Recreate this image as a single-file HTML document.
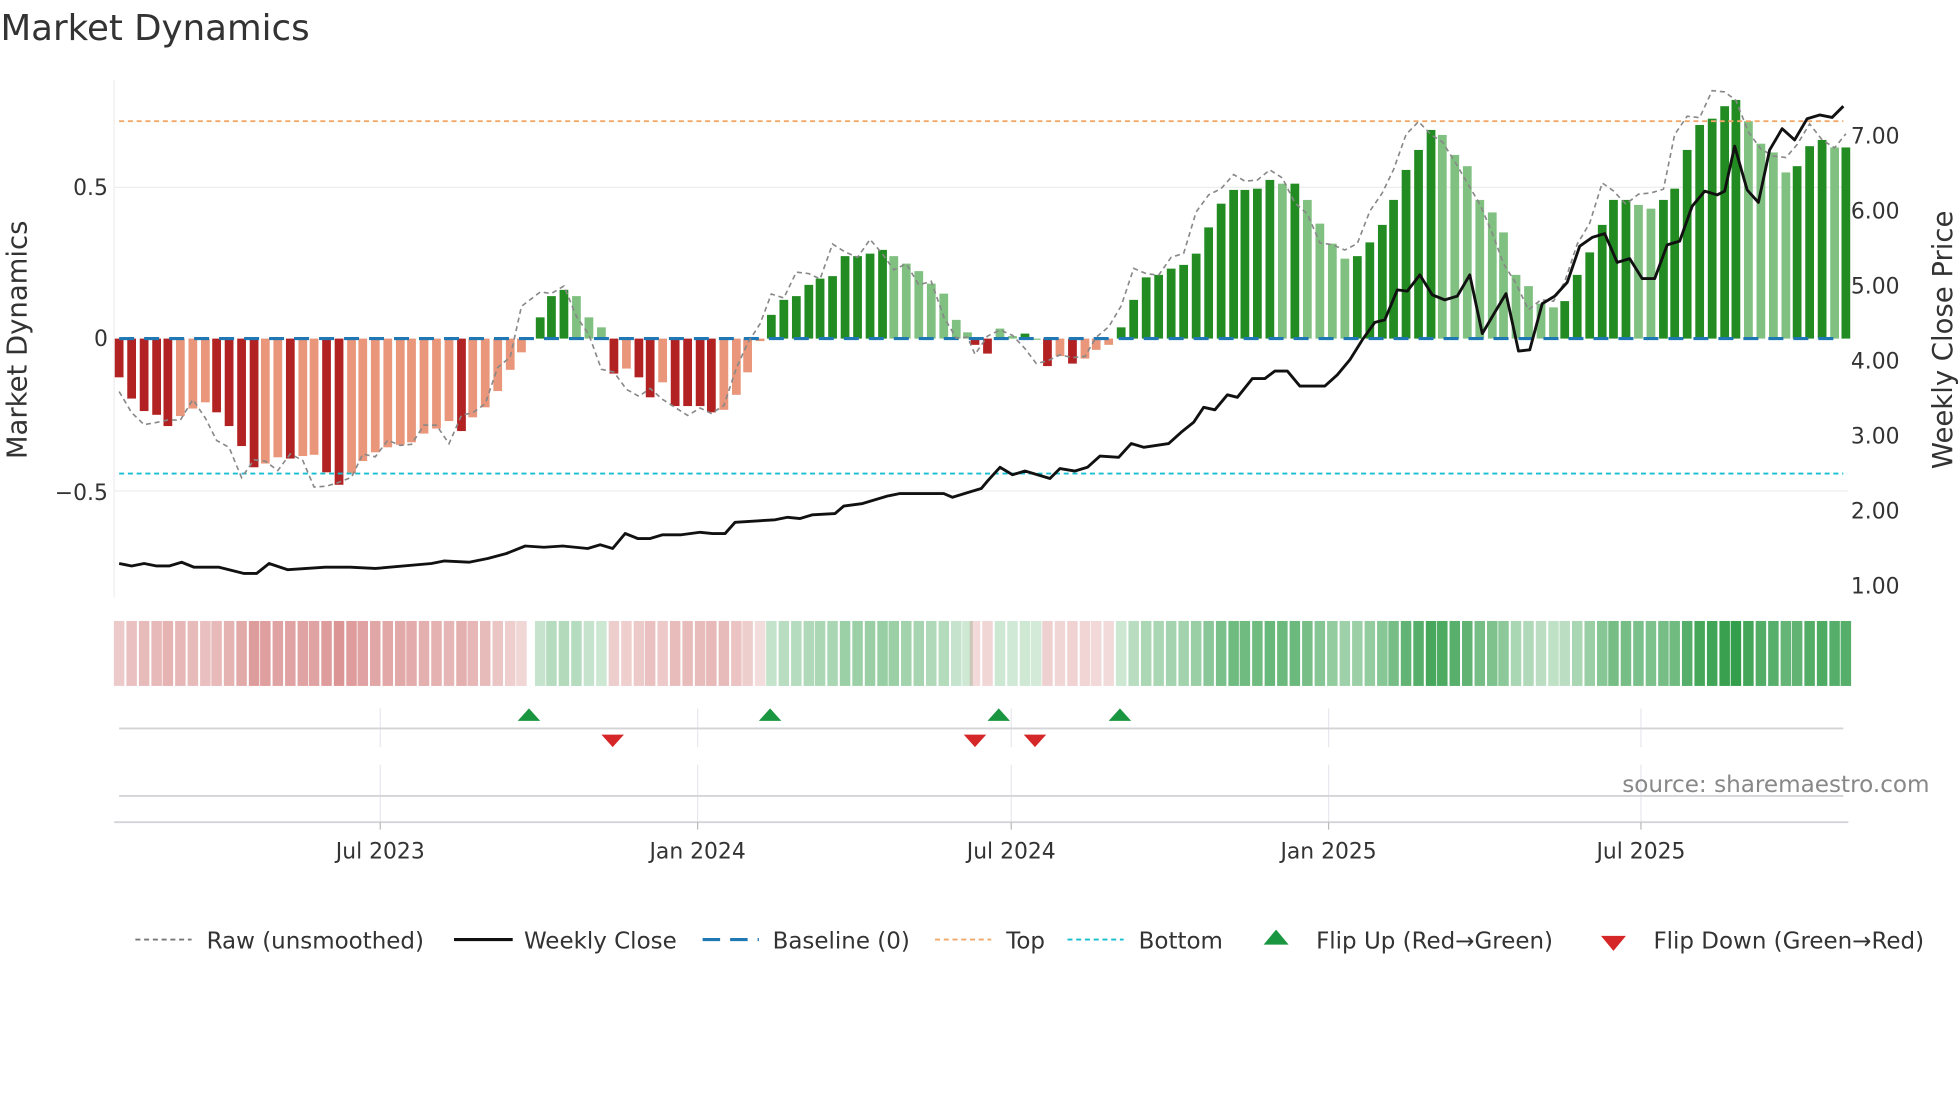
<!DOCTYPE html>
<html><head><meta charset="utf-8"><style>
html,body{margin:0;padding:0;background:#fff;}
svg{display:block;font-family:"DejaVu Sans","Liberation Sans",sans-serif;}
</style></head><body>
<svg id="c" width="1960" height="1102" viewBox="0 0 1568 882" xmlns="http://www.w3.org/2000/svg">
<text x="0" y="32" font-size="28.5" fill="#333">Market Dynamics</text>
<line x1="91" y1="64" x2="91" y2="478" stroke="#eee"/>
<line x1="91" y1="150" x2="1479" y2="150" stroke="#eee"/>
<line x1="91" y1="393" x2="1479" y2="393" stroke="#eee"/>
<g font-size="17.5" fill="#333">
<text x="86" y="156" text-anchor="end">0.5</text>
<text x="86" y="277" text-anchor="end">0</text>
<text x="86" y="400" text-anchor="end">−0.5</text>
<text x="1481" y="115">7.00</text><text x="1481" y="175">6.00</text><text x="1481" y="235">5.00</text>
<text x="1481" y="295">4.00</text><text x="1481" y="355">3.00</text><text x="1481" y="415">2.00</text><text x="1481" y="475">1.00</text>
</g>
<text transform="translate(21,272) rotate(-90)" font-size="22" fill="#333" text-anchor="middle">Market Dynamics</text>
<text transform="translate(1562,272) rotate(-90)" font-size="22" fill="#333" text-anchor="middle">Weekly Close Price</text>
<g id="bars"></g>
<line x1="95" y1="97" x2="1475" y2="97" stroke="#f0a868" stroke-width="1.5" stroke-dasharray="4,3"/>
<line x1="95" y1="379" x2="1475" y2="379" stroke="#17becf" stroke-width="1.5" stroke-dasharray="4,3"/>
<line x1="95" y1="271" x2="1475" y2="271" stroke="#1f77b4" stroke-width="2.5" stroke-dasharray="12,8"/>
<g id="lines"></g>
<g stroke="#e8e8ee">
<line x1="304" y1="567" x2="304" y2="598"/><line x1="558" y1="567" x2="558" y2="598"/><line x1="809" y1="567" x2="809" y2="598"/><line x1="1063" y1="567" x2="1063" y2="598"/><line x1="1313" y1="567" x2="1313" y2="598"/>
<line x1="304" y1="612" x2="304" y2="658"/><line x1="558" y1="612" x2="558" y2="658"/><line x1="809" y1="612" x2="809" y2="658"/><line x1="1063" y1="612" x2="1063" y2="658"/><line x1="1313" y1="612" x2="1313" y2="658"/>
</g>
<line x1="95" y1="583" x2="1475" y2="583" stroke="#d4d4d8" stroke-width="1.5"/>
<line x1="95" y1="637" x2="1475" y2="637" stroke="#d4d4d8" stroke-width="1.5"/>
<line x1="91" y1="658" x2="1479" y2="658" stroke="#d4d4d8" stroke-width="1.5"/>
<g stroke="#bbb"><line x1="304" y1="658" x2="304" y2="664"/><line x1="558" y1="658" x2="558" y2="664"/><line x1="809" y1="658" x2="809" y2="664"/><line x1="1063" y1="658" x2="1063" y2="664"/><line x1="1313" y1="658" x2="1313" y2="664"/></g>
<g fill="#1a9641"><path d="M423 567l9 10h-18z"/><path d="M616 567l9 10h-18z"/><path d="M799 567l9 10h-18z"/><path d="M896 567l9 10h-18z"/></g>
<g fill="#d62728"><path d="M490 598l9 -10h-18z"/><path d="M780 598l9 -10h-18z"/><path d="M828 598l9 -10h-18z"/></g>
<text x="1544" y="634" font-size="18.5" fill="#888" text-anchor="end">source: sharemaestro.com</text>
<g font-size="17.5" fill="#333" text-anchor="middle">
<text x="304" y="687">Jul 2023</text><text x="558" y="687">Jan 2024</text><text x="809" y="687">Jul 2024</text><text x="1063" y="687">Jan 2025</text><text x="1313" y="687">Jul 2025</text>
</g>
<g font-size="18.4" fill="#333">
<line x1="108" y1="752" x2="153" y2="752" stroke="#777" stroke-width="1.5" stroke-dasharray="4,3"/><text x="165" y="759">Raw (unsmoothed)</text>
<line x1="363" y1="752" x2="410" y2="752" stroke="#111" stroke-width="2.5"/><text x="419" y="759">Weekly Close</text>
<line x1="562" y1="752" x2="607" y2="752" stroke="#1f77b4" stroke-width="2.5" stroke-dasharray="14,8"/><text x="618" y="759">Baseline (0)</text>
<line x1="748" y1="752" x2="793" y2="752" stroke="#f0a868" stroke-width="1.5" stroke-dasharray="4,3"/><text x="805" y="759">Top</text>
<line x1="854" y1="752" x2="899" y2="752" stroke="#17becf" stroke-width="1.5" stroke-dasharray="4,3"/><text x="911" y="759">Bottom</text>
<path d="M1021 744l10 12h-20z" fill="#1a9641"/><text x="1053" y="759">Flip Up (Red→Green)</text>
<path d="M1291 761l10 -12h-20z" fill="#d62728"/><text x="1323" y="759">Flip Down (Green→Red)</text>
</g>
</svg>
<script>
var ns="http://www.w3.org/2000/svg";
function el(p,t,a){var e=document.createElementNS(ns,t);for(var k in a)e.setAttribute(k,a[k]);p.appendChild(e);return e;}
var kp=[[95,302],[105,319],[115,329],[125,332],[134,341],[144,333],[154,327],[164,322],[173,330],[183,341],[193,357],[203,374],[212,371],[222,366],[232,367],[242,365],[251,364],[261,378],[271,388],[281,379],[290,369],[300,362],[310,358],[320,356],[329,354],[339,347],[349,343],[359,337],[369,345],[378,334],[388,326],[398,313],[408,296],[417,282],[432,254],[441,237],[451,232],[461,237],[471,254],[481,262],[491,299],[501,295],[511,302],[520,318],[530,306],[540,325],[550,325],[560,325],[569,330],[579,328],[589,316],[598,298],[608,273],[617,252],[627,240],[637,237],[647,228],[656,223],[666,221],[676,205],[686,205],[696,203],[706,200],[715,205],[725,211],[735,217],[745,227],[755,235],[765,256],[774,266],[780,276],[790,283],[800,263],[810,269],[820,267],[829,271],[838,293],[848,285],[858,291],[868,287],[877,280],[887,276],[897,262],[907,240],[917,222],[927,220],[937,215],[947,212],[957,203],[967,182],[977,163],[987,152],[996,152],[1006,151],[1016,144],[1026,147],[1036,147],[1046,160],[1056,179],[1066,195],[1076,207],[1086,205],[1096,194],[1106,180],[1115,160],[1125,136],[1135,120],[1145,104],[1154,108],[1164,124],[1174,133],[1184,160],[1194,170],[1203,186],[1213,220],[1223,229],[1233,243],[1243,246],[1252,241],[1262,220],[1272,202],[1282,180],[1291,160],[1301,160],[1311,164],[1321,167],[1331,160],[1340,151],[1350,120],[1360,100],[1370,95],[1380,85],[1389,80],[1399,97],[1409,115],[1419,122],[1429,138],[1438,133],[1448,117],[1458,112],[1468,118],[1477,118]];
var bars=document.getElementById("bars"),lines=document.getElementById("lines"),svg=document.getElementById("c");
var prev=0,raw=[];
for(var i=0;i<kp.length;i++){var x=kp[i][0],y=kp[i][1],v=271-y,mag=Math.abs(v),grow=mag>=Math.abs(prev)-0.5;var col;
if(v>=0)col=grow?"#228b22":"#80c080";else col=grow?"#b22222":"#e9967a";
el(bars,"rect",{x:x-3.5,y:Math.min(y,271),width:7,height:Math.max(Math.abs(v),1),fill:col});
var a=Math.min(1,mag/200)*0.75+0.2;
var hc=v>=0?"rgba(34,150,60,"+a.toFixed(2)+")":"rgba(190,60,60,"+Math.min(0.75,a*0.85).toFixed(2)+")";
el(svg,"rect",{x:x-4.2,y:497,width:8.4,height:52,fill:hc});
prev=v;var j=Math.min(kp.length-1,i+1);raw.push([x,271-(271-kp[j][1])*1.05+((i*37)%11-5)*1.6]);}
el(lines,"path",{d:"M"+raw.map(function(p){return p[0]+" "+p[1].toFixed(1)}).join("L"),fill:"none",stroke:"#888","stroke-width":1.3,"stroke-dasharray":"4,3"});
var pr=[[95,451],[105,453],[115,451],[125,453],[135,453],[145,450],[155,454],[175,454],[195,459],[205,459],[215,451],[230,456],[245,455],[260,454],[280,454],[300,455],[345,451],[355,449],[375,450],[390,447],[405,443],[420,437],[435,438],[450,437],[470,439],[480,436],[490,439],[500,427],[510,431],[520,431],[530,428],[545,428],[560,426],[570,427],[580,427],[588,418],[620,416],[630,414],[640,415],[650,412],[668,411],[675,405],[690,403],[700,400],[710,397],[720,395],[735,395],[755,395],[762,398],[775,394],[785,391],[790,385],[800,374],[810,380],[820,377],[840,383],[848,375],[860,377],[870,374],[880,365],[895,366],[905,355],[915,358],[935,355],[945,346],[955,338],[963,326],[972,328],[982,316],[990,318],[1002,303],[1012,303],[1020,297],[1030,297],[1040,309],[1060,309],[1070,300],[1080,288],[1090,272],[1100,258],[1108,256],[1118,232],[1126,233],[1136,220],[1146,236],[1156,240],[1166,237],[1176,220],[1186,267],[1196,250],[1205,235],[1215,281],[1224,280],[1234,243],[1244,237],[1254,226],[1264,197],[1274,190],[1284,187],[1294,210],[1304,207],[1314,223],[1324,223],[1334,196],[1344,193],[1354,165],[1364,153],[1374,156],[1380,153],[1388,117],[1398,152],[1407,162],[1416,120],[1426,103],[1436,112],[1446,95],[1456,92],[1466,94],[1475,85]];
el(lines,"path",{d:"M"+pr.map(function(p){return p[0]+" "+p[1]}).join("L"),fill:"none",stroke:"#111","stroke-width":2.3,"stroke-linejoin":"round"});
</script>
</body></html>
